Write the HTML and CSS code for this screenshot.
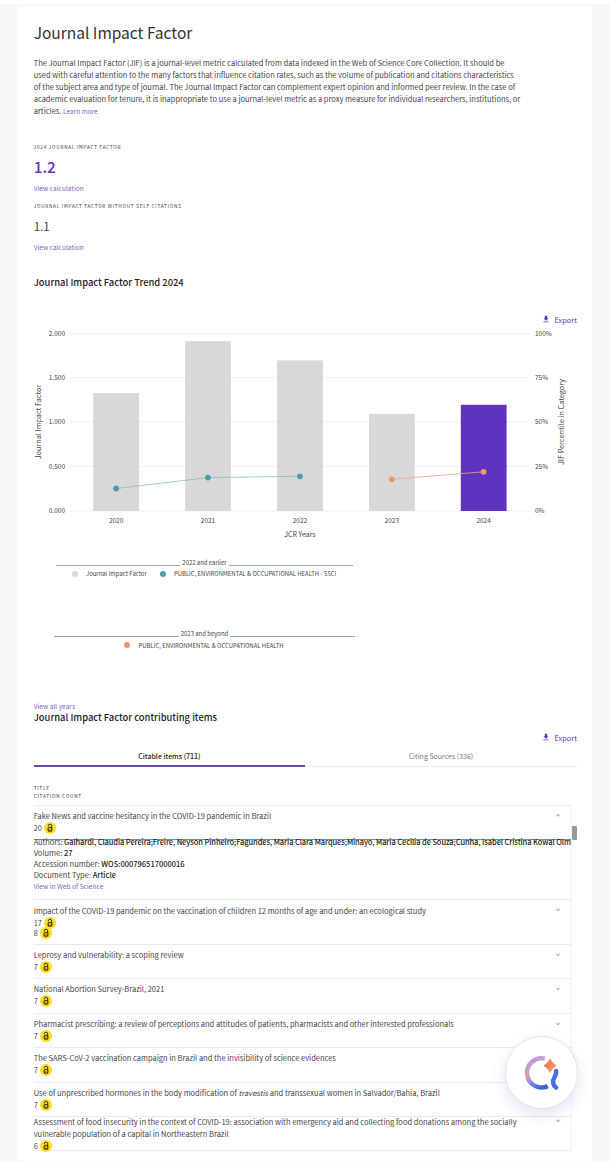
FILE: index.html
```
<!DOCTYPE html>
<html lang="en">
<head>
    <meta charset="UTF-8">
    <meta name="viewport" content="width=device-width, initial-scale=1.0">
    <title>Journal Impact Factor</title>
    <link rel="stylesheet" href="styles.css">
</head>
<body>
    <!-- shared icons -->
    <svg class="defs">
        <symbol id="download" viewBox="0 0 8 8">
            <path d="M2.8 0.8h2.4v2.4h1.3L4 5.8 1.5 3.2h1.3z M1.4 6.4h5.2v0.9H1.4z"/>
        </symbol>
        <symbol id="open-access" viewBox="0 0 12 12">
            <circle cx="6" cy="6" r="6" fill="#fbdc26"/>
            <path d="M4.3 4.3V3.9a1.7 1.7 0 0 1 3.4 0V6" fill="none" stroke="#3a3210" stroke-width="1"/>
            <circle cx="6" cy="7.2" r="2" fill="none" stroke="#3a3210" stroke-width="1.1"/>
            <circle cx="6" cy="7.2" r="0.6" fill="#3a3210"/>
        </symbol>
        <symbol id="chevron" viewBox="0 0 6 4">
            <path d="M1.3 1L3 2.6 4.7 1" fill="none" stroke="#8b87a0" stroke-width="1"/>
        </symbol>
    </svg>

    <main class="card">
        <h1>Journal Impact Factor</h1>
        <p class="intro">
            The Journal Impact Factor (JIF) is a journal-level metric calculated from data indexed in the Web of Science Core Collection. It should be<br>
            used with careful attention to the many factors that influence citation rates, such as the volume of publication and citations characteristics<br>
            of the subject area and type of journal. The Journal Impact Factor can complement expert opinion and informed peer review. In the case of<br>
            academic evaluation for tenure, it is inappropriate to use a journal-level metric as a proxy measure for individual researchers, institutions, or<br>
            articles. <a href="#" class="learn">Learn more</a>
        </p>

        <section class="metrics">
            <div class="label">2024 JOURNAL IMPACT FACTOR</div>
            <div class="value main-value">1.2</div>
            <a href="#" class="link">View calculation</a>
            <div class="label label2">JOURNAL IMPACT FACTOR WITHOUT SELF CITATIONS</div>
            <div class="value">1.1</div>
            <a href="#" class="link link2">View calculation</a>
        </section>

        <h2 class="trend-title">Journal Impact Factor Trend 2024</h2>
        <div class="export"><svg><use href="#download"/></svg><span>Export</span></div>

        <svg class="chart" viewBox="0 0 574 219">
            <g class="grid">
                <path d="M52 7.5H511M52 51.5H511M52 96H511M52 140.5H511M52 185H511"/>
            </g>
            <g class="bars">
                <rect x="75.2" y="67" width="45.8" height="118"/>
                <rect x="167.1" y="15.2" width="45.8" height="169.8"/>
                <rect x="259.1" y="34.4" width="45.8" height="150.6"/>
                <rect x="351" y="87.8" width="45.8" height="97.2"/>
                <rect class="current" x="442.8" y="78.8" width="45.8" height="106.2"/>
            </g>
            <g class="early">
                <path d="M98.1 162.5L190 151.6 281.9 150.3"/>
                <circle cx="98.1" cy="162.5" r="2.9"/>
                <circle cx="190" cy="151.6" r="2.9"/>
                <circle cx="281.9" cy="150.3" r="2.9"/>
            </g>
            <g class="late">
                <path d="M373.8 153.3L465.6 145.8"/>
                <circle cx="373.8" cy="153.3" r="2.9"/>
                <circle cx="465.6" cy="145.8" r="2.9"/>
            </g>
            <g class="ticks left">
                <text x="47" y="9.6">2.000</text>
                <text x="47" y="54">1.500</text>
                <text x="47" y="98.4">1.000</text>
                <text x="47" y="142.8">0.500</text>
                <text x="47" y="187.2">0.000</text>
            </g>
            <g class="ticks">
                <text x="517" y="9.6">100%</text>
                <text x="517" y="54">75%</text>
                <text x="517" y="98.4">50%</text>
                <text x="517" y="142.8">25%</text>
                <text x="517" y="187.2">0%</text>
            </g>
            <g class="ticks years">
                <text x="98.1" y="196.7">2020</text>
                <text x="190" y="196.7">2021</text>
                <text x="281.9" y="196.7">2022</text>
                <text x="373.8" y="196.7">2023</text>
                <text x="465.6" y="196.7">2024</text>
            </g>
            <g class="axis">
                <text x="282" y="211.2">JCR Years</text>
                <text class="side" transform="translate(23 96) rotate(-90)">Journal Impact Factor</text>
                <text class="side" transform="translate(546.3 96) rotate(-90)">JIF Percentile in Category</text>
            </g>
        </svg>

        <div class="legend earlier">
            <div class="period"><span>2022 and earlier</span></div>
            <div class="keys">
                <i class="dot grey"></i><span>Journal Impact Factor</span>
                <i class="dot teal"></i><span>PUBLIC, ENVIRONMENTAL &amp; OCCUPATIONAL HEALTH - SSCI</span>
            </div>
        </div>
        <div class="legend beyond">
            <div class="period"><span>2023 and beyond</span></div>
            <div class="keys">
                <i class="dot orange"></i><span>PUBLIC, ENVIRONMENTAL &amp; OCCUPATIONAL HEALTH</span>
            </div>
        </div>

        <a href="#" class="link all-years">View all years</a>
        <h2 class="items-title">Journal Impact Factor contributing items</h2>
        <div class="export export2"><svg><use href="#download"/></svg><span>Export</span></div>

        <nav class="tabs">
            <div class="tab active">Citable items (711)</div>
            <div class="tab">Citing Sources (336)</div>
        </nav>

        <div class="table-head">
            <div>TITLE</div>
            <div>CITATION COUNT</div>
        </div>

        <div class="list">
            <div class="thumb"></div>
            <article class="item open">
                <svg class="chevron up"><use href="#chevron"/></svg>
                <h3>Fake News and vaccine hesitancy in the COVID-19 pandemic in Brazil</h3>
                <div class="count">20<svg><use href="#open-access"/></svg></div>
                <div class="details">
                    <p class="authors">Authors: <b>Galhardi, Claudia Pereira;Freire, Neyson Pinheiro;Fagundes, Maria Clara Marques;Minayo, Maria Cecilia de Souza;Cunha, Isabel Cristina Kowal Olm</b></p>
                    <p>Volume: <b>27</b></p>
                    <p>Accession number: <b>WOS:000796517000016</b></p>
                    <p>Document Type: <b>Article</b></p>
                    <a href="#" class="link">View in Web of Science</a>
                </div>
            </article>
            <article class="item double">
                <svg class="chevron"><use href="#chevron"/></svg>
                <h3>Impact of the COVID-19 pandemic on the vaccination of children 12 months of age and under: an ecological study</h3>
                <div class="count">17<svg><use href="#open-access"/></svg></div>
                <div class="count second">8<svg><use href="#open-access"/></svg></div>
            </article>
            <article class="item">
                <svg class="chevron"><use href="#chevron"/></svg>
                <h3>Leprosy and vulnerability: a scoping review</h3>
                <div class="count">7<svg><use href="#open-access"/></svg></div>
            </article>
            <article class="item">
                <svg class="chevron"><use href="#chevron"/></svg>
                <h3>National Abortion Survey-Brazil, 2021</h3>
                <div class="count">7<svg><use href="#open-access"/></svg></div>
            </article>
            <article class="item">
                <svg class="chevron"><use href="#chevron"/></svg>
                <h3>Pharmacist prescribing: a review of perceptions and attitudes of patients, pharmacists and other interested professionals</h3>
                <div class="count">7<svg><use href="#open-access"/></svg></div>
            </article>
            <article class="item">
                <h3>The SARS-CoV-2 vaccination campaign in Brazil and the invisibility of science evidences</h3>
                <div class="count">7<svg><use href="#open-access"/></svg></div>
            </article>
            <article class="item">
                <h3>Use of unprescribed hormones in the body modification of <em>travestis</em> and transsexual women in Salvador/Bahia, Brazil</h3>
                <div class="count">7<svg><use href="#open-access"/></svg></div>
            </article>
            <article class="item last">
                <svg class="chevron"><use href="#chevron"/></svg>
                <h3>Assessment of food insecurity in the context of COVID-19: association with emergency aid and collecting food donations among the socially<br>vulnerable population of a capital in Northeastern Brazil</h3>
                <div class="count">6<svg><use href="#open-access"/></svg></div>
            </article>
        </div>
    </main>

    <!-- floating assistant button -->
    <div class="assistant">
        <svg viewBox="0 0 36 36">
            <defs>
                <linearGradient id="ring" x1="0.2" y1="0" x2="0.7" y2="1">
                    <stop offset="0" stop-color="#b49be6"/>
                    <stop offset="0.4" stop-color="#dfa0b4"/>
                    <stop offset="0.7" stop-color="#8085df"/>
                    <stop offset="1" stop-color="#3f62e0"/>
                </linearGradient>
                <linearGradient id="spark" x1="0" y1="0" x2="1" y2="0.6">
                    <stop offset="0" stop-color="#f2693c"/>
                    <stop offset="1" stop-color="#f49a78"/>
                </linearGradient>
            </defs>
            <path d="M21.5 3.8A15 15 0 1 0 24.5 32" fill="none" stroke="url(#ring)" stroke-width="4.6"/>
            <path d="M33 16.5C34 21 29 24 30 29C30.3 31 31.5 32.5 33 33.5" fill="none" stroke="#4b6ee6" stroke-width="4.6" stroke-linecap="round"/>
            <path d="M26.8 4Q29 8.5 33.2 11Q29 13.5 26.8 18Q24.6 13.5 20.4 11Q24.6 8.5 26.8 4z" fill="url(#spark)" stroke="url(#spark)" stroke-width="0.6"/>
        </svg>
    </div>
</body>
</html>
```
FILE: styles.css
```
*{
    margin: 0;
    padding: 0;
    box-sizing: border-box;
}
body{
    height: 1162px;
    overflow: hidden;
    background-color: #f8f8f8;
    border-top: 4px solid #fff;
    font-family: "Noto Sans CJK SC", "Noto Sans", sans-serif;
    font-size: 7.5px;
    color: #444;
    white-space: nowrap;
}
a{
    color: #8562c4;
    text-decoration: none;
}
.defs{
    display: none;
}
.card{
    width: 574px;
    height: 1154px;
    margin: 3px 0 0 18px;
    padding: 15px 0 0 15.7px;
    background-color: #fff;
}
h1{
    font-size: 15.5px;
    font-weight: 400;
    line-height: 20px;
    color: #333;
}
.intro{
    margin-top: 14.5px;
    line-height: 12.2px;
}
.learn{
    font-size: 6.5px;
}
.metrics{
    padding-top: 25.5px;
}
.label{
    font-size: 4.7px;
    line-height: 8px;
    letter-spacing: 0.74px;
    color: #333;
}
.value{
    margin-top: 8px;
    font-size: 11.5px;
    line-height: 16px;
}
.main-value{
    margin-top: 5px;
    font-size: 15.3px;
    font-weight: 500;
    line-height: 20px;
    color: #5e33bf;
}
.link{
    display: block;
    margin-top: 7px;
    font-size: 6.6px;
    line-height: 10px;
}
.label2{
    margin-top: 9px;
}
.link2{
    margin-top: 8px;
}
h2{
    font-size: 9.4px;
    font-weight: 500;
    line-height: 14px;
    color: #222;
}
.trend-title{
    margin-top: 23px;
}
.export{
    display: flex;
    align-items: center;
    justify-content: flex-end;
    gap: 5px;
    height: 12px;
    margin: 24px 15px 1px 0;
    font-size: 7.4px;
    color: #5e33bf;
}
.export svg{
    width: 8px;
    height: 8px;
    fill: #5e33bf;
}

/* chart */
.chart{
    display: block;
    width: 574px;
    height: 219px;
    margin-left: -15.7px;
}
.grid path{
    stroke: #f0f0f0;
    stroke-width: 1;
}
.bars rect{
    fill: #d8d8d8;
}
.bars .current{
    fill: #5e33bf;
}
.early path, .late path{
    fill: none;
    stroke: #8dbac0;
    stroke-width: 0.8;
}
.early circle{
    fill: #4f9eac;
}
.late path{
    stroke: #eda685;
}
.late circle{
    fill: #f29668;
}
.ticks{
    font-size: 6.5px;
    fill: #444;
}
.left{
    text-anchor: end;
}
.years, .axis{
    text-anchor: middle;
}
.axis{
    font-size: 7px;
    fill: #444;
}
.side{
    font-size: 7.3px;
}

/* legend */
.legend{
    width: 297px;
    height: 22px;
    margin: 12px 0 0 22.3px;
    font-size: 5.95px;
}
.period{
    display: flex;
    gap: 2px;
    height: 10px;
    line-height: 11.6px;
}
.period::before, .period::after{
    content: "";
    flex: 1;
    height: 8px;
    border-bottom: 1px solid #9aa8a6;
}
.keys{
    display: flex;
    align-items: center;
    height: 13px;
}
.dot{
    flex: none;
    width: 6px;
    height: 6px;
    border-radius: 50%;
}
.grey{
    margin: 0 8.3px 0 15.7px;
    background-color: #d8d8d8;
}
.teal{
    margin: 0 8px 0 13.2px;
    background-color: #4f9eac;
}
.beyond{
    width: 301px;
    margin: 49px 0 0 20.3px;
}
.beyond .keys{
    height: 14px;
}
.orange{
    margin: 0 8px 0 70.5px;
    background-color: #f29668;
}

/* contributing items */
.all-years{
    margin-top: 51px;
}
.items-title{
    margin-top: -1.3px;
}
.export2{
    margin: 7.3px 15px 0 0;
}
.tabs{
    display: flex;
    width: 543px;
    height: 23px;
    margin-top: 0.5px;
}
.tab{
    flex: 1;
    border-bottom: 1px solid #eee;
    text-align: center;
    line-height: 24px;
    font-size: 7px;
    color: #777;
}
.active{
    border-bottom: 2px solid #6b46b0;
    font-weight: 500;
    color: #222;
}
.table-head{
    padding-top: 17px;
    font-size: 4.8px;
    line-height: 8px;
    letter-spacing: 0.7px;
    color: #333;
}
.list{
    position: relative;
    width: 538.3px;
    margin-top: 5px;
    border-top: 1px solid #ececec;
    border-right: 1px solid #f2f2f2;
}
.thumb{
    position: absolute;
    top: 20px;
    right: -6px;
    width: 5px;
    height: 14px;
    border-radius: 1px;
    background-color: #999;
}
.item{
    position: relative;
    height: 34.5px;
    padding-top: 4px;
    border-bottom: 1px solid #ececec;
}
.item h3{
    font-size: 7.5px;
    font-weight: 400;
    line-height: 12px;
}
.count{
    display: flex;
    align-items: center;
    gap: 2.3px;
    height: 12px;
    font-size: 7.3px;
}
.count svg{
    width: 12px;
    height: 12px;
}
.second{
    margin-top: -2px;
}
.chevron{
    position: absolute;
    top: 8px;
    right: 10px;
    width: 6px;
    height: 4px;
}
.up{
    top: 7px;
    transform: scaleY(-1);
}
.open{
    height: 94px;
}
.details{
    margin-top: 5px;
    border-top: 1px solid #5d95a1;
    line-height: 10.8px;
}
.details b{
    font-weight: 500;
    color: #222;
}
.details .authors{
    margin: -2.3px 0 0.2px;
    letter-spacing: -0.092px;
}
.details .link{
    margin-top: 0;
    line-height: 10.8px;
}
.double{
    height: 45px;
    padding-top: 5px;
}
.last{
    padding-top: 0;
}
.last h3{
    margin-top: -1px;
}
.last .chevron{
    top: 3px;
}

.assistant{
    position: absolute;
    top: 1036px;
    left: 505px;
    width: 73px;
    height: 73px;
    border: 1px solid #e6e4ea;
    border-radius: 50%;
    background-color: #fff;
    box-shadow: 0 6px 16px rgba(94, 51, 191, 0.15);
}
.assistant svg{
    position: absolute;
    top: 18px;
    left: 18px;
    width: 35px;
    height: 35px;
}
```
